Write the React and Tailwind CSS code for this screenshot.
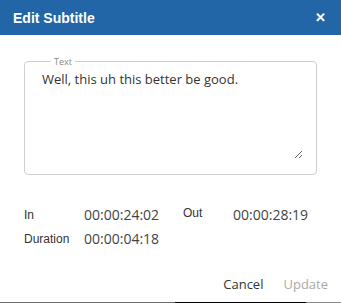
import { useState } from 'react';

export default function App() {
    const [text, setText] = useState('Well, this uh this better be good.');

    const sans = { fontFamily: '"Open Sans", sans-serif' };

    return (
        <div className="w-[341px] h-[303px] bg-white flex flex-col overflow-hidden">
            <div className="h-[35px] bg-[#2266a8] flex items-center justify-between pl-[13px] pr-[15px] shrink-0">
                <h1 className="text-white font-bold text-[14px] font-['Liberation_Sans',Arial,sans-serif] pt-px">
                    Edit Subtitle
                </h1>
                <button className="text-white font-bold text-[13px] font-['Liberation_Sans',Arial,sans-serif] leading-none">
                    ✕
                </button>
            </div>

            <div className="flex-1 px-[24px] pt-[21px]" style={sans}>
                <fieldset className="border border-[#cfcfcf] rounded-[4px] h-[119px] pl-[17px] pr-[13px]">
                    <legend className="ml-[9px] px-[3px] text-[9px] leading-[11px] text-[#888]">Text</legend>
                    <textarea
                        value={text}
                        onChange={(e) => setText(e.target.value)}
                        className="w-full h-[89px] mt-[3px] outline-none text-[13px] leading-[18px] text-[#333] resize-y"
                        style={sans}
                    />
                </fieldset>

                <div className="mt-[29px] grid grid-cols-[60px_99px_50px_1fr] gap-y-[3px] items-center">
                    <span className="text-[12px] text-[#333] font-['Liberation_Sans',Arial,sans-serif]">In</span>
                    <span className="text-[14px] text-[#444]">00:00:24:02</span>
                    <span className="text-[12px] text-[#333] font-['Liberation_Sans',Arial,sans-serif] -mt-[3px]">Out</span>
                    <span className="text-[14px] text-[#444]">00:00:28:19</span>
                    <span className="text-[12px] text-[#333] font-['Liberation_Sans',Arial,sans-serif]">Duration</span>
                    <span className="text-[14px] text-[#444]">00:00:04:18</span>
                </div>

                <div className="flex justify-end gap-[20px] mt-[26px] mr-[-11px]">
                    <button className="text-[13px] text-[#333]">Cancel</button>
                    <button className="text-[13px] text-[#aaa]">Update</button>
                </div>
            </div>

            <div className="flex h-px shrink-0">
                <div className="w-[175px] bg-[#6b6b6b]" />
                <div className="w-[131px] bg-black" />
                <div className="flex-1 bg-[#8a8a8a]" />
            </div>
        </div>
    );
}
